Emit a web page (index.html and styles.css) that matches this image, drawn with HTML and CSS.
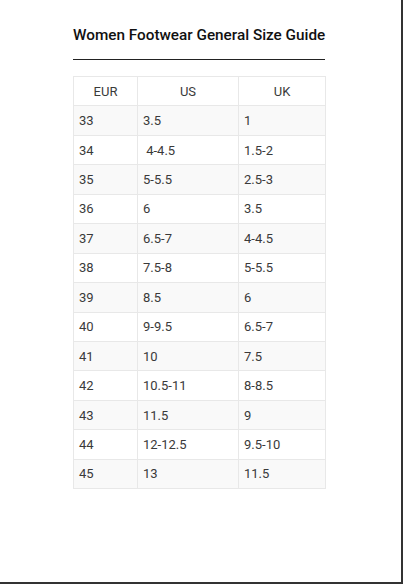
FILE: index.html
```html
<!DOCTYPE html>
<html>
<head>
<meta charset="utf-8">
<link rel="stylesheet" href="styles.css">
</head>
<body>
<div class="frame">
  <div class="guide">
    <h2 class="title">Women Footwear General Size Guide</h2>
    <table class="sizes">
      <thead>
        <tr><th class="c1">EUR</th><th class="c2">US</th><th class="c3">UK</th></tr>
      </thead>
      <tbody>
        <tr><td>33</td><td>3.5</td><td>1</td></tr>
        <tr><td>34</td><td>&nbsp;4-4.5</td><td>1.5-2</td></tr>
        <tr><td>35</td><td>5-5.5</td><td>2.5-3</td></tr>
        <tr><td>36</td><td>6</td><td>3.5</td></tr>
        <tr><td>37</td><td>6.5-7</td><td>4-4.5</td></tr>
        <tr><td>38</td><td>7.5-8</td><td>5-5.5</td></tr>
        <tr><td>39</td><td>8.5</td><td>6</td></tr>
        <tr><td>40</td><td>9-9.5</td><td>6.5-7</td></tr>
        <tr><td>41</td><td>10</td><td>7.5</td></tr>
        <tr><td>42</td><td>10.5-11</td><td>8-8.5</td></tr>
        <tr><td>43</td><td>11.5</td><td>9</td></tr>
        <tr><td>44</td><td>12-12.5</td><td>9.5-10</td></tr>
        <tr><td>45</td><td>13</td><td>11.5</td></tr>
      </tbody>
    </table>
  </div>
</div>
</body>
</html>
```
FILE: styles.css
```css
html, body {
  margin: 0;
  padding: 0;
  background: #ffffff;
}
.frame {
  width: 401px;
  height: 582px;
  border-right: 2px solid #333333;
  border-bottom: 2px solid #333333;
  background: #ffffff;
  overflow: hidden;
}
.guide {
  width: 252px;
  margin-left: 73px;
  padding-top: 25px;
  font-family: Roboto, "Liberation Sans", sans-serif;
}
.title {
  margin: 0;
  font-size: 15.3px;
  font-weight: 500;
  line-height: 20px;
  color: #111111;
  padding-bottom: 14px;
  border-bottom: 1px solid #222222;
  white-space: nowrap;
}
.sizes {
  margin-top: 16px;
  width: 253px;
  border-collapse: collapse;
  font-size: 13px;
  color: #3a3a3a;
}
.sizes th, .sizes td {
  border: 1px solid #e8e8e8;
  height: 29.45px;
  padding: 0 5px;
  line-height: 19px;
  box-sizing: border-box;
}
.sizes th {
  font-weight: 400;
  text-align: center;
  background: #ffffff;
}
.sizes td {
  text-align: left;
}
.sizes tbody tr:nth-child(odd) td {
  background: #f9f9f9;
}
.c1 { width: 64px; }
.c2 { width: 101px; }
.c3 { width: 87px; }
```
